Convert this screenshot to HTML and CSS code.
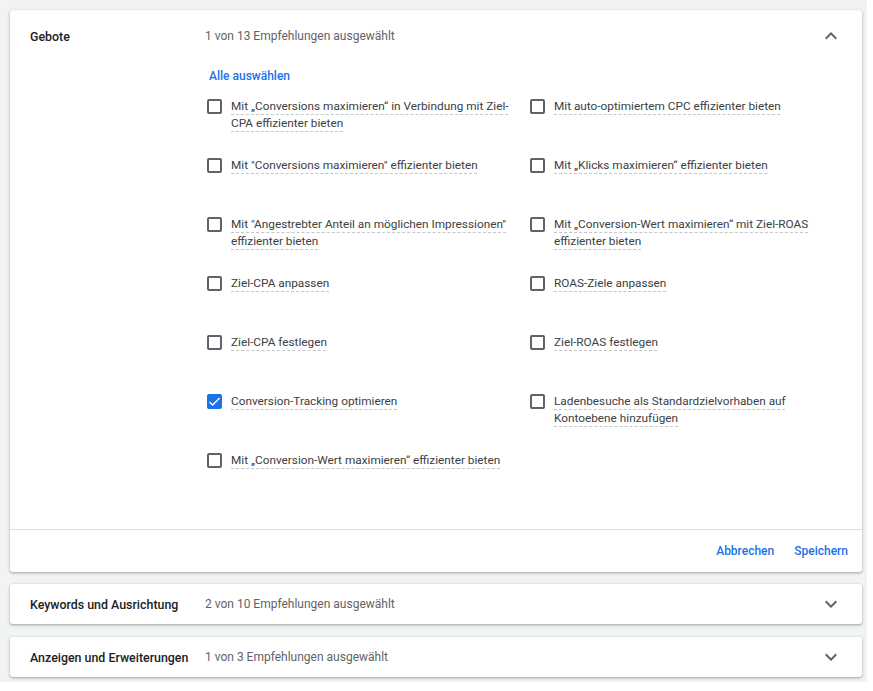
FILE: index.html
```html
<!DOCTYPE html>
<html lang="de">
<head>
<meta charset="utf-8">
<title>Empfehlungen</title>
<link rel="stylesheet" href="styles.css">
</head>
<body>
<div class="page">
  <section class="card card-open">
    <div class="card-head card-head-open">
      <div class="title">Gebote</div>
      <div class="summary">1 von 13 Empfehlungen ausgewählt</div>
      <svg class="chev" viewBox="0 0 24 24"><path d="M7.41 15.41L12 10.83l4.59 4.58L18 14l-6-6-6 6z"/></svg>
    </div>
    <div class="card-body">
      <div class="select-all">Alle auswählen</div>
      <div class="grid">
        <label class="item"><span class="box"></span><span class="txt"><span class="u">Mit „Conversions maximieren“ in Verbindung mit Ziel-CPA effizienter bieten</span></span></label>
        <label class="item"><span class="box"></span><span class="txt"><span class="u">Mit auto-optimiertem CPC effizienter bieten</span></span></label>
        <label class="item"><span class="box"></span><span class="txt"><span class="u">Mit "Conversions maximieren" effizienter bieten</span></span></label>
        <label class="item"><span class="box"></span><span class="txt"><span class="u">Mit „Klicks maximieren“ effizienter bieten</span></span></label>
        <label class="item"><span class="box"></span><span class="txt"><span class="u">Mit "Angestrebter Anteil an möglichen Impressionen" effizienter bieten</span></span></label>
        <label class="item"><span class="box"></span><span class="txt"><span class="u">Mit „Conversion-Wert maximieren“ mit Ziel-ROAS effizienter bieten</span></span></label>
        <label class="item"><span class="box"></span><span class="txt"><span class="u">Ziel-CPA anpassen</span></span></label>
        <label class="item"><span class="box"></span><span class="txt"><span class="u">ROAS-Ziele anpassen</span></span></label>
        <label class="item"><span class="box"></span><span class="txt"><span class="u">Ziel-CPA festlegen</span></span></label>
        <label class="item"><span class="box"></span><span class="txt"><span class="u">Ziel-ROAS festlegen</span></span></label>
        <label class="item"><span class="box checked"><svg viewBox="0 0 24 24"><path d="M9 16.17L4.83 12l-1.42 1.41L9 19 21 7l-1.41-1.41z"/></svg></span><span class="txt"><span class="u">Conversion-Tracking optimieren</span></span></label>
        <label class="item"><span class="box"></span><span class="txt"><span class="u">Ladenbesuche als Standardzielvorhaben auf Kontoebene hinzufügen</span></span></label>
        <label class="item"><span class="box"></span><span class="txt"><span class="u">Mit „Conversion-Wert maximieren“ effizienter bieten</span></span></label>
      </div>
    </div>
    <div class="card-foot">
      <span class="btn">Abbrechen</span>
      <span class="btn">Speichern</span>
    </div>
  </section>

  <section class="card">
    <div class="card-head">
      <div class="title">Keywords und Ausrichtung</div>
      <div class="summary">2 von 10 Empfehlungen ausgewählt</div>
      <svg class="chev" viewBox="0 0 24 24"><path d="M16.59 8.59L12 13.17 7.41 8.59 6 10l6 6 6-6z"/></svg>
    </div>
  </section>

  <section class="card card-last">
    <div class="card-head">
      <div class="title">Anzeigen und Erweiterungen</div>
      <div class="summary">1 von 3 Empfehlungen ausgewählt</div>
      <svg class="chev" viewBox="0 0 24 24"><path d="M16.59 8.59L12 13.17 7.41 8.59 6 10l6 6 6-6z"/></svg>
    </div>
  </section>
</div>
</body>
</html>
```

FILE: styles.css
```css
* { box-sizing: border-box; }
html, body { margin: 0; padding: 0; background: #ffffff; }
body { font-family: Roboto, "Liberation Sans", Arial, sans-serif; color: #3c4043; }

.page {
  width: 867px;
  height: 682px;
  background: #f1f3f4;
  padding: 10px 5px 0 10px;
  display: flex;
  flex-direction: column;
  gap: 12px;
}

.card {
  background: #fff;
  border-radius: 3px;
  box-shadow: 0 1px 2px rgba(60,64,67,.3), 0 1px 3px 1px rgba(60,64,67,.12);
}
.card-last { margin-top: 1px; }

.card-head {
  display: flex;
  align-items: center;
  height: 40px;
  padding: 0 19px 0 20px;
}
.card-head-open { height: 52px; }

.title {
  width: 175px;
  flex: none;
  font-size: 12.4px;
  font-weight: 500;
  color: #202124;
}
.summary {
  flex: 1;
  font-size: 12px;
  color: #5f6368;
}
.chev { width: 24px; height: 24px; fill: #5f6368; flex: none; }

.card-body {
  padding: 6px 0 18px 197px;
  border-bottom: 1px solid #dadce0;
}
.select-all {
  font-size: 12px;
  font-weight: 500;
  color: #1a73e8;
  line-height: 16px;
  padding-left: 2px;
  margin-bottom: 14px;
}

.grid {
  display: grid;
  grid-template-columns: 323px 1fr;
  grid-auto-rows: 59px;
}
.item {
  display: flex;
  align-items: flex-start;
  gap: 9px;
  font-size: 11.8px;
  line-height: 17px;
}
.box {
  width: 15px;
  height: 15px;
  flex: none;
  margin-top: 1px;
  border: 2px solid #5f6368;
  border-radius: 2px;
  display: flex;
  align-items: center;
  justify-content: center;
}
.box.checked { background: #1a73e8; border-color: #1a73e8; }
.box.checked svg { width: 15px; height: 15px; fill: #fff; flex: none; }
.txt { max-width: 285px; color: #3c4043; }
.u {
  text-decoration-line: underline;
  text-decoration-style: dashed;
  text-decoration-color: #c4c7ca;
  text-decoration-thickness: 1px;
  text-underline-offset: 4px;
}

.card-foot {
  height: 42px;
  display: flex;
  align-items: center;
  justify-content: flex-end;
  gap: 20px;
  padding-right: 14px;
}
.btn {
  font-size: 12px;
  font-weight: 500;
  color: #1a73e8;
}
```
